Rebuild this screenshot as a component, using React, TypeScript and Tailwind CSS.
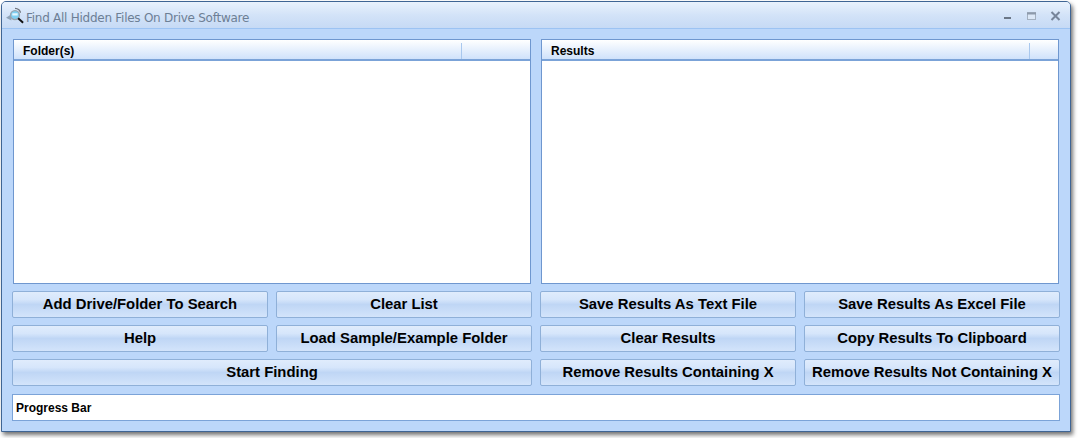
const buttonClass =
  "h-[27px] rounded-[2px] border border-[#8fb0d8] bg-[linear-gradient(to_bottom,#e0ecfc_0%,#d6e6fb_30%,#bfd6f5_50%,#d3e4fb_100%)] pb-px text-[14.85px] leading-none font-bold text-black";

function ListPanel({ title, headerWidth }: { title: string; headerWidth: string }) {
  return (
    <div className="flex h-[245px] flex-1 flex-col border border-[#6f97cf] bg-white">
      <div className="flex h-[21px] border-b-2 border-[#7ba3d8] bg-[linear-gradient(to_bottom,#ffffff,#cfe2fb)] pt-[3px] text-[12px] leading-[15px] font-bold text-black">
        <div className={`${headerWidth} border-r border-[#a9c8ee] pl-[9px]`}>
          <span className="relative top-px">{title}</span>
        </div>
      </div>
    </div>
  );
}

function FindIcon() {
  return (
    <svg width="18" height="18" viewBox="0 0 20 20" className="mt-[2px] shrink-0">
      <path d="M0 12l6-4v7z" fill="#8fa3b8" />
      <path d="M10 1.500c3.500 0 6 2.500 6 5" stroke="#70767e" strokeWidth="1.500" fill="none" />
      <circle cx="10" cy="9" r="5" fill="#7fd0f2" stroke="#9aa4ae" strokeWidth="1.500" />
      <path d="M7 7h6v2.500H7z" fill="#e3f7ff" />
      <path d="M13.500 12.500l5.500 5" stroke="#111" strokeWidth="2.200" />
    </svg>
  );
}

export default function App() {
  return (
    <div className="h-[438px] w-[1078px] bg-white pt-px pl-px font-['Liberation_Sans',Arial,sans-serif]">
      <div className="flex h-[431px] w-[1070px] flex-col overflow-hidden rounded-t-[5px] border border-[#3f6594] bg-[#bcd7fa] shadow-[2px_3px_4px_rgba(0,0,0,0.55)]">
        <div className="flex h-[27px] shrink-0 items-center border-b border-[#9cc3f3] bg-[linear-gradient(to_bottom,#e9f2fd,#d3e3f8_50%,#c6daf5)] pr-[8px] pl-[4px]">
          <FindIcon />
          <span className="mt-[5px] ml-[2px] flex-1 font-['DejaVu_Sans',sans-serif] text-[12px] tracking-[-0.26px] text-[#6d7f95]">
            Find All Hidden Files On Drive Software
          </span>
          <div className="flex items-center">
            <svg width="10" height="10" viewBox="0 0 10 10" className="mt-[2px]">
              <path d="M1 7h7" stroke="#6b7787" strokeWidth="2" />
            </svg>
            <svg width="12" height="10" viewBox="0 0 12 10" className="mt-[2px] ml-[13px]">
              <rect x="1.500" y="1.500" width="8" height="7" fill="#dce8f7" stroke="#a3b0c0" />
              <path d="M1 2.500h9" stroke="#8d9aab" strokeWidth="2" />
            </svg>
            <svg width="12" height="10" viewBox="0 0 12 10" className="mt-[1px] ml-[12px]">
              <path d="M1.500 1l8 8M9.500 1l-8 8" stroke="#77859a" strokeWidth="2" />
            </svg>
          </div>
        </div>
        <div className="flex flex-1 flex-col px-[10px] pt-[10px]">
          <div className="flex gap-[10px] px-px">
            <ListPanel title="Folder(s)" headerWidth="w-[448px]" />
            <ListPanel title="Results" headerWidth="w-[488px]" />
          </div>
          <div className="mt-[7px] grid grid-cols-4 gap-x-[8px] gap-y-[7px]">
            <button className={buttonClass}>Add Drive/Folder To Search</button>
            <button className={buttonClass}>Clear List</button>
            <button className={buttonClass}>Save Results As Text File</button>
            <button className={buttonClass}>Save Results As Excel File</button>
            <button className={buttonClass}>Help</button>
            <button className={buttonClass}>Load Sample/Example Folder</button>
            <button className={buttonClass}>Clear Results</button>
            <button className={buttonClass}>Copy Results To Clipboard</button>
            <button className={`${buttonClass} col-span-2`}>Start Finding</button>
            <button className={buttonClass}>Remove Results Containing X</button>
            <button className={buttonClass}>Remove Results Not Containing X</button>
          </div>
          <div className="mt-[8px] flex h-[27px] items-center border border-[#7ba3d8] bg-white pl-[3px] text-[12px] font-bold text-black">
            Progress Bar
          </div>
        </div>
      </div>
    </div>
  );
}
